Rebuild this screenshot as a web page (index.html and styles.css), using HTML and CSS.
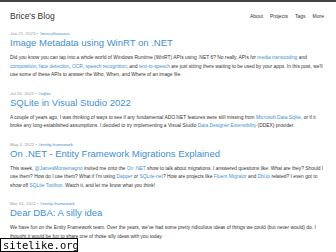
FILE: index.html
```html
<!DOCTYPE html>
<html lang="en">
<head>
    <meta charset="UTF-8">
    <meta name="viewport" content="width=device-width, initial-scale=1.0">
    <title>Brice's Blog</title>
    <link rel="stylesheet" href="styles.css">
</head>
<body>

    <header class="site-header">
        <a class="site-title" href="#">Brice's Blog</a>
        <nav class="site-nav">
            <a href="#">About</a>
            <a href="#">Projects</a>
            <a href="#">Tags</a>
            <a href="#">More</a>
        </nav>
    </header>

    <main class="posts">
        <article class="post">
            <div class="post-meta">Jan 21, 2023 • <a href="#">#miscellaneous</a></div>
            <h2 class="post-title"><a href="#">Image Metadata using WinRT on .NET</a></h2>
            <p>Did you know you can tap into a whole world of Windows Runtime (WinRT) APIs using .NET 6? No really, APIs for <a href="#">media transcoding</a> and <a href="#">composition</a>, <a href="#">face detection</a>, <a href="#">OCR</a>, <a href="#">speech recognition</a>, and <a href="#">text-to-speech</a> are just sitting there waiting to be used by your apps. In this post, we'll use some of these APIs to answer the Who, When, and Where of an image file.</p>
        </article>

        <article class="post">
            <div class="post-meta">Jul 26, 2022 • <a href="#">#sqlite</a></div>
            <h2 class="post-title"><a href="#">SQLite in Visual Studio 2022</a></h2>
            <p>A couple of years ago, I was thinking of ways to see if any fundamental ADO.NET features were still missing from <a href="#">Microsoft.Data.Sqlite</a>, or if it broke any long-established assumptions. I decided to try implementing a Visual Studio <a href="#">Data Designer Extensibility</a> (DDEX) provider.</p>
        </article>

        <article class="post">
            <div class="post-meta">May 4, 2022 • <a href="#">#entity-framework</a></div>
            <h2 class="post-title"><a href="#">On .NET - Entity Framework Migrations Explained</a></h2>
            <p>This week, <a href="#">@JamesMontemagno</a> invited me onto the <a href="#">On .NET</a> show to talk about migrations. I answered questions like: What are they? Should I use them? How do I use them? What if I'm using <a href="#">Dapper</a> or <a href="#">SQLite-net</a>? How are projects like <a href="#">Fluent Migrator</a> and <a href="#">DbUp</a> related? I even got to show off <a href="#">SQLite Toolbox</a>. Watch it, and let me know what you think!</p>
        </article>

        <article class="post">
            <div class="post-meta">Mar 01, 2022 • <a href="#">#entity-framework</a></div>
            <h2 class="post-title"><a href="#">Dear DBA: A silly idea</a></h2>
            <p>We have fun on the Entity Framework team. Over the years, we've had some pretty ridiculous ideas of things we could (but never would) do. I thought it would be fun to share one of those silly ideas with you today.</p>
        </article>
    </main>

    <div class="watermark">sitelike.org</div>

</body>
</html>
```

FILE: styles.css
```css
body {
    font-family: 'Liberation Sans', Arial, sans-serif;
    margin: 0;
    padding: 0;
    color: #333;
    background: #fff;
    border-top: 2px solid #424242;
}

a {
    color: #3f8fd2;
    text-decoration: none;
}

.site-header {
    display: flex;
    justify-content: space-between;
    align-items: center;
    padding: 4px 10px 0 10px;
    height: 19px;
}

.site-title {
    color: #333;
    font-size: 8.5px;
}

.site-nav {
    display: flex;
    gap: 7px;
    font-size: 5px;
    padding-right: 2px;
}

.site-nav a {
    color: #333;
}

.posts {
    padding: 0 10px;
}

.post {
    margin-top: 6px;
}

.post-meta {
    font-size: 4.4px;
    color: #999;
    line-height: 6px;
}

.post-title {
    margin: 0;
    font-size: 9.5px;
    font-weight: normal;
    line-height: 12px;
}

.post p {
    margin: 5px 0 11px 0;
    font-size: 4.9px;
    line-height: 8.5px;
}

.watermark {
    position: fixed;
    left: 0;
    bottom: 0;
    width: 74px;
    height: 12px;
    border: 1px solid #000;
    background: #fff;
    color: #000;
    font-family: 'DejaVu Sans Mono', monospace;
    font-size: 10.5px;
    line-height: 12px;
    padding-left: 2px;
}
```
